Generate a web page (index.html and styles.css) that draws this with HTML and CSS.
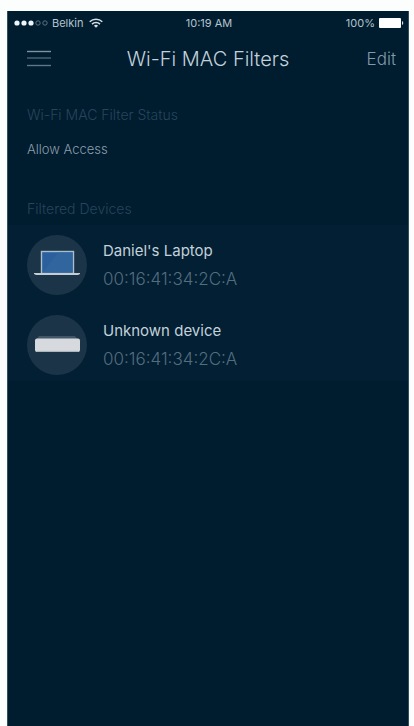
FILE: index.html
```html
<!DOCTYPE html>
<html lang="en">

<head>
    <meta charset="UTF-8" />
    <meta name="viewport" content="width=device-width, initial-scale=1.0" />
    <title>Wi-Fi MAC Filters</title>
    <link rel="stylesheet" href="styles.css">
</head>

<body>
    <div class="screen">
        <div class="status-bar">
            <div class="carrier">
                <svg width="34" height="6" viewBox="0 0 34 6" aria-hidden="true">
                    <g fill="#eef5fa">
                        <circle cx="3" cy="3" r="2.6" />
                        <circle cx="10" cy="3" r="2.6" />
                        <circle cx="17" cy="3" r="2.6" />
                    </g>
                    <g fill="none" stroke="#71848f" stroke-width="0.8">
                        <circle cx="24" cy="3" r="2.2" />
                        <circle cx="31" cy="3" r="2.2" />
                    </g>
                </svg>
                <span>Belkin</span>
                <svg width="14" height="10" viewBox="0 0 14 10" aria-hidden="true">
                    <g fill="none" stroke="#d5dfe6" stroke-width="1.5">
                        <path d="M0.7 3.8a9 9 0 0 1 12.6 0" />
                        <path d="M3 6.1a5.7 5.7 0 0 1 8 0" />
                    </g>
                    <path d="M7 9.8 4.9 7.7a3 3 0 0 1 4.2 0z" fill="#d5dfe6" />
                </svg>
            </div>
            <span class="time">10:19 AM</span>
            <div class="battery">
                <span>100%</span>
                <svg width="25" height="10" viewBox="0 0 25 10" aria-hidden="true">
                    <rect width="22" height="10" rx="1" fill="#fff" />
                    <path d="M23 3a2.2 2.2 0 0 1 0 4z" fill="#d5dfe6" />
                </svg>
            </div>
        </div>

        <header class="nav-bar">
            <button class="menu" aria-label="Menu">
                <svg width="24" height="18" viewBox="0 0 24 18">
                    <g stroke-width="1.4">
                        <path d="M0 1.5h24" stroke="#7d95a2" />
                        <path d="M0 8h24" stroke="#4c6575" />
                        <path d="M0 15.5h24" stroke="#5e7786" />
                    </g>
                </svg>
            </button>
            <h1>Wi-Fi MAC Filters</h1>
            <button class="edit">Edit</button>
        </header>

        <main>
            <section class="filter-status">
                <h2>Wi-Fi MAC Filter Status</h2>
                <p>Allow Access</p>
            </section>

            <section>
                <h2 class="list-title">Filtered Devices</h2>
                <ul class="devices">
                    <li>
                        <span class="icon">
                            <svg width="48" height="32" viewBox="0 0 48 32" aria-hidden="true">
                                <rect x="8.5" y="2.5" width="32" height="22" fill="#2b5f9e" stroke="#a9bfcb" stroke-width="1.4" />
                                <path d="M9.5 23.5 25 3.5H39.5V23.5z" fill="#34699f" opacity="0.6" />
                                <path d="M1 24h46v1l-2 1H3l-2-1z" fill="#c5cfd3" />
                            </svg>
                        </span>
                        <div>
                            <h3>Daniel's Laptop</h3>
                            <p>00:16:41:34:2C:A</p>
                        </div>
                    </li>
                    <li>
                        <span class="icon">
                            <svg width="48" height="32" viewBox="0 0 48 32" aria-hidden="true">
                                <path d="M6 7h36l3 4H3z" fill="#42566a" />
                                <rect x="2" y="9.5" width="45" height="13.5" rx="2" fill="#d6d9de" />
                                <path d="M4 22.4h41" stroke="#aab1b9" />
                            </svg>
                        </span>
                        <div>
                            <h3>Unknown device</h3>
                            <p>00:16:41:34:2C:A</p>
                        </div>
                    </li>
                </ul>
            </section>
        </main>
    </div>
</body>

</html>
```
FILE: styles.css
```css
* {
    margin: 0;
    padding: 0;
    box-sizing: border-box;
}

:root {
    --bg: #001c2f;
    --panel: #021f33;
    --icon-bg: #1b3447;
    --text: #c3d1da;
}

body {
    background-color: #fcfefe;
    color: var(--text);
    font-family: Inter, "Liberation Sans", sans-serif;
    min-height: 100vh;
    padding: 11px 5px 0 7px;
    display: flex;
}

.screen {
    flex: 1;
    background-color: var(--bg);
    border: 1px solid #31505d;
    border-width: 0 1px;
}

.status-bar {
    display: grid;
    grid-template-columns: 1fr auto 1fr;
    align-items: center;
    height: 24px;
    padding: 0 4px 0 6px;
    font-size: 11px;
    color: #b4c3cd;
}

.carrier,
.battery {
    display: flex;
    align-items: center;
    gap: 4px;
}

.carrier span {
    margin-right: 2px;
}

.battery {
    justify-content: flex-end;
}

.nav-bar {
    display: grid;
    grid-template-columns: 1fr auto 1fr;
    align-items: center;
    height: 48px;
    padding: 0 12px;
}

.nav-bar h1 {
    font-size: 20px;
    font-weight: 300;
}

button {
    background-color: transparent;
    border: none;
    color: #8299a8;
    font: inherit;
    cursor: pointer;
}

.menu {
    justify-self: start;
    display: flex;
    margin-left: 7px;
}

.edit {
    justify-self: end;
    font-size: 17px;
    font-weight: 300;
}

h2 {
    color: #26455a;
    font-size: 14px;
    font-weight: 300;
    line-height: 20px;
}

.filter-status {
    padding: 22px 19px 0;
}

.filter-status p {
    margin-top: 14px;
    color: #8b9eab;
    font-size: 13px;
    font-weight: 300;
    line-height: 20px;
}

.list-title {
    margin-top: 40px;
    padding: 0 19px;
}

.devices {
    margin-top: 6px;
    padding: 10px 19px 6px;
    background-color: var(--panel);
    list-style: none;
}

.devices li {
    display: flex;
    align-items: center;
    gap: 16px;
}

.devices li + li {
    margin-top: 20px;
}

.icon {
    display: flex;
    align-items: center;
    justify-content: center;
    width: 60px;
    height: 60px;
    border-radius: 50%;
    background-color: var(--icon-bg);
}

.devices h3 {
    font-size: 15px;
    font-weight: 400;
    line-height: 28px;
}

.devices p {
    color: #546d7e;
    font-size: 17px;
    font-weight: 300;
    line-height: 28px;
}
```
